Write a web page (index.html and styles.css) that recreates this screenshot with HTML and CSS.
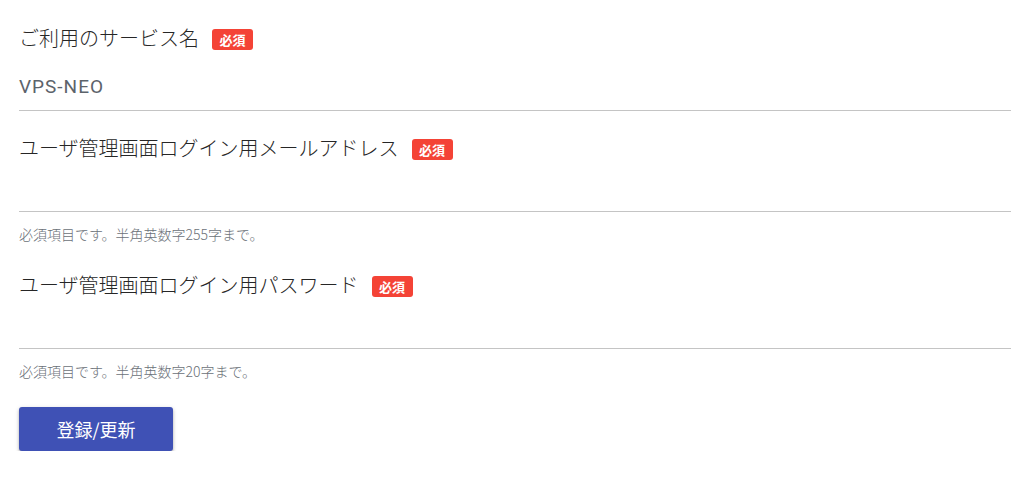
FILE: index.html
```html
<!DOCTYPE html>
<html lang="ja">
<head>
<meta charset="utf-8">
<link rel="stylesheet" href="styles.css">
</head>
<body>
<form class="form">
  <div class="field field-first">
    <div class="label-row"><span class="label">ご利用のサービス名</span><span class="badge">必須</span></div>
    <div class="input input-value"><span class="value">VPS-NEO</span></div>
  </div>
  <div class="field">
    <div class="label-row"><span class="label">ユーザ管理画面ログイン用メールアドレス</span><span class="badge">必須</span></div>
    <div class="input"></div>
    <div class="hint">必須項目です。半角英数字255字まで。</div>
  </div>
  <div class="field">
    <div class="label-row"><span class="label">ユーザ管理画面ログイン用パスワード</span><span class="badge">必須</span></div>
    <div class="input"></div>
    <div class="hint">必須項目です。半角英数字20字まで。</div>
  </div>
  <div class="actions">
    <button type="button" class="btn">登録/更新</button>
  </div>
</form>
</body>
</html>
```

FILE: styles.css
```css
html, body {
  margin: 0;
  padding: 0;
  background: #ffffff;
}
body {
  font-family: "Noto Sans CJK JP", "Noto Sans", sans-serif;
  color: #222222;
}
.form {
  display: flex;
  flex-direction: column;
  padding: 23px 0 0 19px;
}
.field {
  display: flex;
  flex-direction: column;
  margin-top: 22px;
}
.field-first {
  margin-top: 0;
}
.label-row {
  display: flex;
  align-items: center;
  height: 30px;
}
.label {
  font-size: 20px;
  line-height: 30px;
  font-weight: 300;
  color: #262626;
}
.badge {
  margin-left: 13px;
  height: 21px;
  width: 41px;
  display: inline-flex;
  align-items: center;
  justify-content: center;
  background: #f44336;
  color: #ffffff;
  font-weight: 700;
  font-size: 13px;
  border-radius: 3px;
  margin-top: 2px;
}
.input {
  height: 48px;
  border-bottom: 1px solid #c4c4c4;
  box-sizing: content-box;
}
.input-value {
  height: auto;
  padding: 19px 0 8px;
}
.value {
  display: block;
  font-family: "Roboto", sans-serif;
  font-size: 19px;
  font-weight: 400;
  letter-spacing: 1px;
  line-height: 30px;
  color: #5c636b;
}
.hint {
  margin-top: 13px;
  margin-bottom: 5px;
  font-size: 14px;
  line-height: 18px;
  font-weight: 300;
  color: #6b7178;
}
.actions {
  display: flex;
  margin-top: 22px;
}
.btn {
  width: 154px;
  height: 44px;
  border: none;
  border-radius: 3px;
  background: #3f51b5;
  color: #ffffff;
  font-family: "Noto Sans CJK JP", sans-serif;
  font-size: 18px;
  font-weight: 400;
  box-shadow: 0 2px 3px rgba(0, 0, 0, 0.25), 0 1px 5px rgba(0, 0, 0, 0.12);
  cursor: pointer;
}
```
